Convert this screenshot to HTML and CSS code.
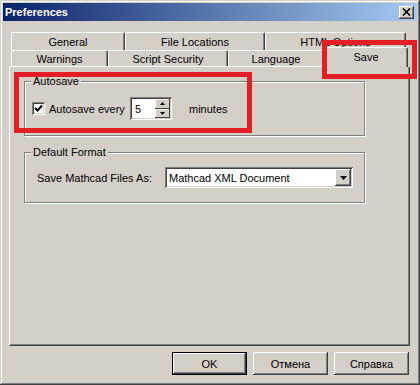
FILE: index.html
```html
<!DOCTYPE html>
<html>
<head>
    <title>Preferences</title>
    <meta charset="UTF-8">
    <link rel="stylesheet" href="styles.css">
</head>
<body>
    <div class="window">
        <div class="titlebar">
            <span class="title">Preferences</span>
            <span class="close">
                <svg width="9" height="8" viewBox="0 0 9 8"><path d="M1 0.5 L8 7.5 M8 0.5 L1 7.5" stroke="#000" stroke-width="1.6" fill="none"/></svg>
            </span>
        </div>

        <div class="tabs">
            <div class="tab-row back">
                <div class="tab t-general">General</div>
                <div class="tab t-locations">File Locations</div>
                <div class="tab t-html">HTML Options</div>
            </div>
            <div class="tab-row front">
                <div class="tab t-warnings">Warnings</div>
                <div class="tab t-security">Script Security</div>
                <div class="tab t-language">Language</div>
                <div class="tab t-save selected">Save</div>
            </div>
        </div>

        <div class="panel">
            <div class="group group-autosave">
                <span class="group-title">Autosave</span>
                <div class="row autosave-row">
                    <span class="checkbox">
                        <svg width="9" height="9" viewBox="0 0 9 9"><path d="M1 4 L3.5 6.5 L8 1.5" stroke="#000" stroke-width="2" fill="none"/></svg>
                    </span>
                    <span class="autosave-label">Autosave every</span>
                    <span class="spin">
                        <span class="spin-value">5</span>
                        <span class="spin-btns">
                            <span class="spin-btn"><svg width="5" height="3" viewBox="0 0 5 3"><path d="M2.5 0 L5 3 L0 3 Z" fill="#000"/></svg></span>
                            <span class="spin-btn"><svg width="5" height="3" viewBox="0 0 5 3"><path d="M0 0 L5 0 L2.5 3 Z" fill="#000"/></svg></span>
                        </span>
                    </span>
                    <span class="unit">minutes</span>
                </div>
            </div>

            <div class="group group-format">
                <span class="group-title">Default Format</span>
                <div class="row format-row">
                    <span class="format-label">Save Mathcad Files As:</span>
                    <span class="combo">
                        <span class="combo-value">Mathcad XML Document</span>
                        <span class="combo-btn"><svg width="7" height="4" viewBox="0 0 7 4"><path d="M0 0 L7 0 L3.5 4 Z" fill="#000"/></svg></span>
                    </span>
                </div>
            </div>
        </div>

        <div class="buttons">
            <div class="btn default">OK</div>
            <div class="btn">Отмена</div>
            <div class="btn">Справка</div>
        </div>

        <div class="mark mark-autosave"></div>
        <div class="mark mark-save"></div>
    </div>
</body>
</html>
```

FILE: styles.css
```css
body {
    margin: 0;
    font-family: 'Liberation Sans', Arial, sans-serif;
    font-size: 11px;
    color: #000;
    background: #d4d0c8;
}

.window {
    position: relative;
    width: 420px;
    height: 385px;
    box-sizing: border-box;
    padding: 3px;
    background: #d4d0c8;
    box-shadow: inset -1px -1px #404040, inset 1px 1px #d4d0c8,
                inset -2px -2px #808080, inset 2px 2px #fff;
}

/* title bar */
.titlebar {
    height: 18px;
    display: flex;
    align-items: center;
    justify-content: space-between;
    padding-left: 2px;
    background: linear-gradient(to right, #0a246a, #a6caf0);
}
.title { color: #fff; font-weight: bold; font-size: 11px; }
.close {
    width: 15px;
    height: 13px;
    margin-right: 3px;
    display: flex;
    align-items: center;
    justify-content: center;
    background: #d4d0c8;
    box-shadow: inset -1px -1px #404040, inset 1px 1px #fff, inset -2px -2px #808080;
}

/* tabs */
.tabs { margin: 11px 0 0 8px; }
.tab-row { display: flex; }
.tab-row.back { height: 18px; }
.tab-row.front { height: 16px; }
.tab {
    box-sizing: border-box;
    display: flex;
    align-items: center;
    justify-content: center;
    border-top: 1px solid #fff;
    border-left: 1px solid #fff;
    border-right: 1px solid #404040;
    border-radius: 2px 2px 0 0;
    box-shadow: inset -1px 0 #808080;
    background: #d4d0c8;
}
.t-general { width: 114px; }
.t-locations { width: 140px; }
.t-html { width: 141px; }
.t-warnings { width: 97px; }
.t-security { width: 120px; }
.t-language { width: 96px; }
.t-save { width: 84px; }
.tab.selected {
    position: relative;
    z-index: 1;
    height: 20px;
    margin-top: -3px;
    padding-bottom: 2px;
}

/* panel */
.panel {
    box-sizing: border-box;
    width: 401px;
    height: 280px;
    margin-left: 6px;
    padding: 14px 0 0 14px;
    border: 1px solid;
    border-color: #fff #404040 #404040 #fff;
    box-shadow: inset -1px -1px #808080;
}

.group {
    position: relative;
    box-sizing: border-box;
    width: 341px;
    border: 1px solid #808080;
    box-shadow: 1px 1px #fff, inset 1px 1px #fff;
}
.group-title {
    position: absolute;
    top: -7px;
    left: 6px;
    padding: 0 2px;
    line-height: 13px;
    background: #d4d0c8;
}
.group-autosave { height: 55px; }
.group-format { height: 51px; margin-top: 16px; }

.row { display: flex; align-items: center; }
.autosave-row { height: 23px; margin-top: 15px; padding-left: 7px; }
.format-row { height: 21px; margin-top: 14px; padding-left: 12px; }

.checkbox {
    box-sizing: border-box;
    width: 13px;
    height: 13px;
    display: flex;
    align-items: center;
    justify-content: center;
    background: #fff;
    box-shadow: inset 1px 1px #808080, inset -1px -1px #fff,
                inset 2px 2px #404040, inset -2px -2px #d4d0c8;
}
.autosave-label { width: 81px; margin-left: 4px; }

.spin {
    box-sizing: border-box;
    width: 42px;
    height: 23px;
    display: flex;
    align-items: center;
    padding: 2px 2px 2px 5px;
    background: #fff;
    box-shadow: inset 1px 1px #808080, inset -1px -1px #fff,
                inset 2px 2px #404040, inset -2px -2px #d4d0c8;
}
.spin-value { flex: 1; }
.spin-btns { display: flex; flex-direction: column; height: 19px; width: 15px; }
.spin-btn {
    flex: 1;
    display: flex;
    align-items: center;
    justify-content: center;
    background: #d4d0c8;
    box-shadow: inset -1px -1px #404040, inset 1px 1px #fff;
}
.unit { margin-left: 17px; }

.format-label { width: 128px; }
.combo {
    box-sizing: border-box;
    width: 188px;
    height: 21px;
    display: flex;
    align-items: center;
    padding: 2px;
    background: #fff;
    box-shadow: inset 1px 1px #808080, inset -1px -1px #fff,
                inset 2px 2px #404040, inset -2px -2px #d4d0c8;
}
.combo-value { flex: 1; padding-left: 2px; }
.combo-btn {
    width: 16px;
    height: 17px;
    display: flex;
    align-items: center;
    justify-content: center;
    background: #d4d0c8;
    box-shadow: inset -1px -1px #404040, inset 1px 1px #fff, inset -2px -2px #808080;
}

/* buttons */
.buttons {
    display: flex;
    justify-content: flex-end;
    gap: 6px;
    margin-top: 6px;
    padding-right: 8px;
}
.btn {
    box-sizing: border-box;
    width: 75px;
    height: 23px;
    display: flex;
    align-items: center;
    justify-content: center;
    background: #d4d0c8;
    box-shadow: inset -1px -1px #404040, inset 1px 1px #fff, inset -2px -2px #808080;
}
.btn.default { border: 1px solid #000; }

/* red highlight marks */
.mark {
    position: absolute;
    box-sizing: border-box;
    border: 5px solid #e31e24;
    z-index: 2;
}
.mark-autosave { left: 14px; top: 72px; width: 238px; height: 61px; }
.mark-save { left: 322px; top: 40px; width: 95px; height: 39px; }
```
